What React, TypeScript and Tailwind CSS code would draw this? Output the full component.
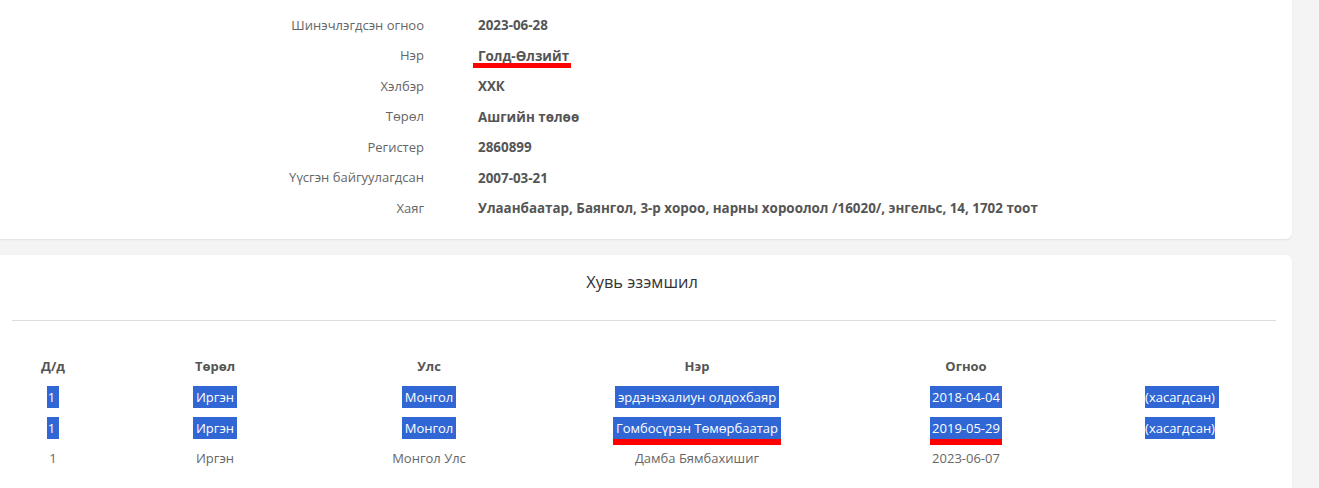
import React from 'react';

type Info = { label: string; value: string; mark?: boolean };

const info: Info[] = [
  { label: 'Шинэчлэгдсэн огноо', value: '2023-06-28' },
  { label: 'Нэр', value: 'Голд-Өлзийт', mark: true },
  { label: 'Хэлбэр', value: 'ХХК' },
  { label: 'Төрөл', value: 'Ашгийн төлөө' },
  { label: 'Регистер', value: '2860899' },
  { label: 'Үүсгэн байгуулагдсан', value: '2007-03-21' },
  { label: 'Хаяг', value: 'Улаанбаатар, Баянгол, 3-р хороо, нарны хороолол /16020/, энгельс, 14, 1702 тоот' },
];

type Owner = { no: string; type: string; country: string; name: string; date: string; note: string; selected: boolean; markName?: boolean; markDate?: boolean };

const owners: Owner[] = [
  { no: '1', type: 'Иргэн', country: 'Монгол', name: 'эрдэнэхалиун олдохбаяр', date: '2018-04-04', note: '(хасагдсан)', selected: true },
  { no: '1', type: 'Иргэн', country: 'Монгол', name: 'Гомбосүрэн Төмөрбаатар', date: '2019-05-29', note: '(хасагдсан)', selected: true, markName: true, markDate: true },
  { no: '1', type: 'Иргэн', country: 'Монгол Улс', name: 'Дамба Бямбахишиг', date: '2023-06-07', note: '', selected: false },
];

const cols = 'grid grid-cols-[82px_242px_186px_350px_188px_240px]';

// selected-text look + red annotation bar
const Cell = ({ text, selected, mark, pad = 'px-[2.5px]' }: { text: string; selected: boolean; mark?: boolean; pad?: string }) => {
  if (!text) return <div />;
  return (
    <div className="flex justify-center">
      <span className={`relative leading-[22px] ${selected ? `bg-[#3166d5] text-white ${pad}` : 'text-[#666]'}`}>
        {text}
        {mark && <span className="absolute left-0 right-0 top-full h-[6px] bg-[#f00]" />}
      </span>
    </div>
  );
};

export default function App() {
  return (
    <div className="min-h-screen w-full bg-[#f4f4f4] text-[13px]" style={{ fontFamily: '"Open Sans", "Liberation Sans", sans-serif' }}>
      <div className="w-[1292px] bg-white rounded-br-md shadow-[0_1px_2px_rgba(0,0,0,0.08)] pt-[10px] pb-[15px]">
        {info.map((r) => (
          <div key={r.label} className="grid grid-cols-[424px_1fr] gap-x-[54px] h-[30.5px] items-center">
            <div className="text-right text-[#666]">{r.label}</div>
            <div className="font-bold text-[#555] text-[13.4px]">
              <span className="relative">
                {r.value}
                {r.mark && <span className="absolute -left-[5px] -right-[2px] top-[16px] h-[5px] bg-[#f00]" />}
              </span>
            </div>
          </div>
        ))}
      </div>

      <div className="mt-[16px] w-[1292px] bg-white rounded-tr-md shadow-[0_1px_2px_rgba(0,0,0,0.08)] pt-[16px] pb-[30px]">
        <div className="text-center text-[16.4px] leading-[22px] text-[#333] pr-[8px]">Хувь эзэмшил</div>
        <div className="ml-[12px] mr-[16px] mt-[27px] border-t border-[#ddd]" />
        <div className="pl-[12px] mt-[35px]">
          <div className={`${cols} h-[22px] items-center font-bold text-[#555]`}>
            <div className="text-center">Д/д</div>
            <div className="text-center">Төрөл</div>
            <div className="text-center">Улс</div>
            <div className="text-center">Нэр</div>
            <div className="text-center">Огноо</div>
            <div />
          </div>
          {owners.map((o, i) => (
            <div key={i} className={`${cols} mt-[8.5px] h-[22px] items-center`}>
              <Cell text={o.no} selected={o.selected} pad="pl-[1px] pr-[4px]" />
              <Cell text={o.type} selected={o.selected} />
              <Cell text={o.country} selected={o.selected} />
              <Cell text={o.name} selected={o.selected} mark={o.markName} />
              <Cell text={o.date} selected={o.selected} mark={o.markDate} />
              <Cell text={o.note} selected={o.selected} pad={i === 0 ? 'ml-[4px] pr-[4px]' : ''} />
            </div>
          ))}
        </div>
      </div>
    </div>
  );
}
